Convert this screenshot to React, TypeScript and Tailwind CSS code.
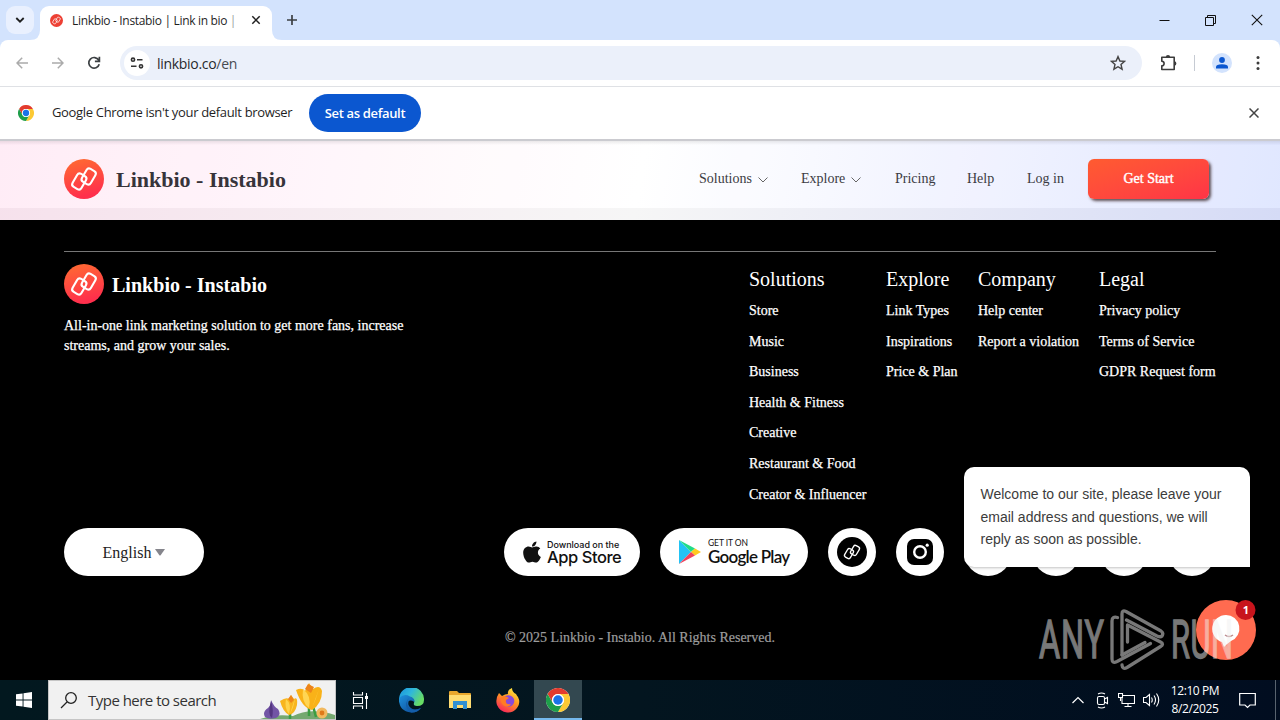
import React from "react";
import { FaApple } from "react-icons/fa";

const UI = "font-['Open_Sans','Noto_Sans',sans-serif]";
const SERIF = "font-['Liberation_Serif',serif]";

function LinkGlyph() {
  return (
    <g fill="none" stroke="#fff" strokeWidth="2.100" strokeLinejoin="round">
      <rect x="10.200" y="15" width="10.200" height="15" rx="3" transform="rotate(30 15.300 22.500)" />
      <rect x="19.600" y="10" width="10.200" height="15" rx="3" transform="rotate(30 24.700 17.500)" />
    </g>
  );
}

function Logo({ id }: { id: string }) {
  return (
    <svg width="40" height="40" viewBox="0 0 40 40" className="shrink-0">
      <defs>
        <linearGradient id={id} x1="0" y1="0" x2="0.25" y2="1">
          <stop offset="0" stopColor="#ff6d31" />
          <stop offset="1" stopColor="#ff2f4c" />
        </linearGradient>
      </defs>
      <circle cx="20" cy="20" r="20" fill={`url(#${id})`} />
      <LinkGlyph />
    </svg>
  );
}

function Chrome({ size }: { size: number }) {
  return (
    <svg width={size} height={size} viewBox="0 0 48 48" className="shrink-0">
      <circle cx="24" cy="24" r="24" fill="#fff" />
      <path d="M3.200 12 A24 24 0 0 1 44.800 12 H24 A12 12 0 0 0 13.600 30 Z" fill="#e33b2e" />
      <path d="M44.800 12 A24 24 0 0 1 24 48 L34.400 30 A12 12 0 0 0 24 12 Z" fill="#fcc934" />
      <path d="M24 48 A24 24 0 0 1 3.200 12 L13.600 30 A12 12 0 0 0 34.400 30 Z" fill="#1e9e4a" />
      <circle cx="24" cy="24" r="12" fill="#fff" />
      <circle cx="24" cy="24" r="9.500" fill="#1a73e8" />
    </svg>
  );
}

function TabStrip() {
  return (
    <div className="flex h-10 shrink-0 bg-[#d3e3fd]">
      <div className="flex w-10 items-center pl-[6px]">
        <div className="flex h-7 w-7 items-center justify-center rounded-[9px] bg-[#e9f0fe]">
          <svg width="10" height="8" viewBox="0 0 10 8" fill="none" stroke="#1f1f1f" strokeWidth="1.800">
            <path d="M1.300 2 L5 5.700 L8.700 2" />
          </svg>
        </div>
      </div>
      <div className="relative mt-[6px] flex w-[232px] items-center rounded-t-[9px] bg-white pb-[6px] pl-[10px]">
        <svg width="10" height="10" viewBox="0 0 10 10" className="absolute bottom-0 -left-[10px]">
          <path d="M10 0 V10 H0 Q10 10 10 0" fill="#fff" />
        </svg>
        <svg width="10" height="10" viewBox="0 0 10 10" className="absolute -right-[10px] bottom-0">
          <path d="M0 0 V10 H10 Q0 10 0 0" fill="#fff" />
        </svg>
        <svg width="13" height="13" viewBox="0 0 40 40" className="shrink-0">
          <circle cx="20" cy="20" r="20" fill="#ed4034" />
          <LinkGlyph />
        </svg>
        <span className={`ml-[9px] w-[170px] pt-[2px] text-[12px] leading-4 tracking-[-0.33px] whitespace-nowrap text-[#1f1f1f] ${UI}`}>
          Linkbio - Instabio | Link in bio <span className="text-[#999]">|</span>
        </span>
        <svg width="10" height="10" viewBox="0 0 10 10" className="absolute top-[9px] right-[11px]" stroke="#1f1f1f" strokeWidth="1.500">
          <path d="M1.300 1.300 L8.700 8.700 M8.700 1.300 L1.300 8.700" />
        </svg>
      </div>
      <div className="flex flex-1 items-center pl-[14px]">
        <svg width="12" height="12" viewBox="0 0 12 12" stroke="#3c4043" strokeWidth="1.700">
          <path d="M6 1 V11 M1 6 H11" />
        </svg>
      </div>
      <div className="flex items-center">
        <svg width="11" height="11" viewBox="0 0 11 11" stroke="#111" className="mr-[35px]">
          <path d="M0.500 5.500 H10.500" />
        </svg>
        <svg width="11" height="11" viewBox="0 0 11 11" stroke="#111" fill="none" className="mr-[35px]">
          <path d="M0.500 2.500 H8.500 V10.500 H0.500 Z M2.500 2.500 V0.500 H10.500 V8.500 H8.500" />
        </svg>
        <svg width="12" height="12" viewBox="0 0 12 12" stroke="#111" strokeWidth="1.100" className="mr-[17px]">
          <path d="M0.800 0.800 L11.200 11.200 M11.200 0.800 L0.800 11.200" />
        </svg>
      </div>
    </div>
  );
}

function Toolbar() {
  return (
    <div className="h-[47px] shrink-0 bg-[#d3e3fd]">
      <div className="flex h-full items-center rounded-t-[8px] border-b border-[#dfe1e5] bg-white pl-4">
        <svg width="12" height="12" viewBox="0 0 12 12" fill="none" stroke="#ababab" strokeWidth="1.500">
          <path d="M12 6 H1.200 M6.200 0.800 L1 6 L6.200 11.200" />
        </svg>
        <svg width="12" height="12" viewBox="0 0 12 12" fill="none" stroke="#ababab" strokeWidth="1.500" className="ml-6">
          <path d="M0 6 H10.800 M5.800 0.800 L11 6 L5.800 11.200" />
        </svg>
        <svg width="14" height="14" viewBox="0 0 14 14" fill="none" stroke="#3c4043" strokeWidth="1.700" className="ml-[23px]">
          <path d="M11.700 4.200 A5.300 5.300 0 1 0 12.200 8.200 M12.400 0.800 V5.300 H7.900" />
        </svg>
        <div className="ml-[19px] flex h-[34px] w-[1022px] items-center rounded-full bg-[#ebf0fa] pl-1">
          <div className="flex h-[26px] w-[26px] items-center justify-center rounded-full bg-white">
            <svg width="14" height="12" viewBox="0 0 14 12" fill="none" stroke="#333" strokeWidth="1.600">
              <circle cx="3" cy="2.700" r="1.600" />
              <path d="M7 2.700 H12.500 M1 9.300 H6.500" />
              <circle cx="11" cy="9.300" r="1.600" />
            </svg>
          </div>
          <span className={`ml-[7px] pt-px text-[14px] leading-5 tracking-[-0.3px] text-[#27292c] ${UI}`}>
            linkbio.co<span className="text-[#474a50]">/en</span>
          </span>
          <svg width="16" height="16" viewBox="0 0 16 16" fill="none" stroke="#444" strokeWidth="1.400" className="mr-4 ml-auto">
            <path d="M8 1.600 L9.900 6 L14.600 6.400 L11 9.500 L12.100 14.200 L8 11.700 L3.900 14.200 L5 9.500 L1.400 6.400 L6.100 6 Z" />
          </svg>
        </div>
        <svg width="18" height="18" viewBox="0 0 18 18" fill="none" className="ml-[18px]">
          <path d="M1.800 3.200 H14.200 V15.500 H1.800 V11.800 A2.200 2.200 0 0 0 1.800 7.200 Z" stroke="#3c3c3c" strokeWidth="1.600" strokeLinejoin="round" />
          <path d="M5.800 3.200 A2.200 2.200 0 0 1 10.200 3.200 Z M14.200 7.200 A2.200 2.200 0 0 1 14.200 11.600 Z" fill="#3c3c3c" />
        </svg>
        <div className="ml-4 h-4 w-px bg-[#c6cbd3]" />
        <svg width="20" height="20" viewBox="0 0 20 20" className="ml-[17px]">
          <circle cx="10" cy="10" r="10" fill="#d3e3fd" />
          <circle cx="10" cy="7" r="2.900" fill="#0b57d0" />
          <path d="M4 15.500 V14 Q4 11.200 10 11.200 Q16 11.200 16 14 V15.500 Z" fill="#0b57d0" />
        </svg>
        <svg width="4" height="16" viewBox="0 0 4 16" fill="#3c3c3c" className="ml-6">
          <circle cx="2" cy="2.500" r="1.500" />
          <circle cx="2" cy="8" r="1.500" />
          <circle cx="2" cy="13.500" r="1.500" />
        </svg>
      </div>
    </div>
  );
}

function InfoBar() {
  return (
    <div className={`flex h-[52px] shrink-0 items-center bg-white pl-[18px] text-[13px] ${UI}`}>
      <Chrome size={16} />
      <span className="ml-[18px] w-[257px] tracking-[-0.33px] whitespace-nowrap text-[#1f1f1f]">Google Chrome isn't your default browser</span>
      <div className="flex h-[38px] w-28 items-center justify-center rounded-full bg-[#0b57d0] pt-px font-semibold tracking-[-0.35px] whitespace-nowrap text-white">
        Set as default
      </div>
      <svg width="10" height="10" viewBox="0 0 10 10" stroke="#444" strokeWidth="1.500" className="mr-[21px] ml-auto">
        <path d="M0.500 0.500 L9.500 9.500 M9.500 0.500 L0.500 9.500" />
      </svg>
    </div>
  );
}

function Caret() {
  return (
    <svg width="10" height="6" viewBox="0 0 10 6" fill="none" stroke="#666" className="mt-[3px] ml-[6px]">
      <path d="M0.500 0.500 L5 5 L9.500 0.500" />
    </svg>
  );
}

function SiteHeader() {
  return (
    <div className="flex h-[81px] shrink-0 flex-col border-t-2 border-[#cbcbd0] bg-[linear-gradient(100deg,#ffeaf5_0%,#fff_50%,#eff1ff_76%,#dde4ff_100%)]">
      <div className="h-1 shrink-0 bg-linear-to-b from-black/8 to-transparent" />
      <div className="flex h-[63px] shrink-0 items-center bg-white/10 px-16 pt-[5px] text-[14px] text-[#3b3b42]">
        <Logo id="logo-top" />
        <span className="ml-3 text-[22px] font-bold text-[#37343a]">Linkbio - Instabio</span>
        <div className="ml-auto flex items-center pb-[2px]">
          <div className="flex w-[102px] items-center">Solutions<Caret /></div>
          <div className="flex w-[94px] items-center">Explore<Caret /></div>
          <div className="w-[72px]">Pricing</div>
          <div className="w-[60px]">Help</div>
          <div className="w-[61px]">Log in</div>
        </div>
        <div className="mr-[7px] flex h-10 w-[121px] items-center justify-center rounded-[6px] bg-linear-to-br from-[#ff5b30] to-[#ff3346] pb-[2px] text-white shadow-[2px_2px_3px_rgba(50,30,30,0.75)]">
          <span className="[-webkit-text-stroke:0.4px_white]">Get Start</span>
        </div>
      </div>
      <div className="h-3 shrink-0 bg-black/[0.035]" />
    </div>
  );
}

const columns = [
  { title: "Solutions", width: "w-[137px]", links: ["Store", "Music", "Business", "Health & Fitness", "Creative", "Restaurant & Food", "Creator & Influencer"] },
  { title: "Explore", width: "w-[92px]", links: ["Link Types", "Inspirations", "Price & Plan"] },
  { title: "Company", width: "w-[121px]", links: ["Help center", "Report a violation"] },
  { title: "Legal", width: "w-[117px]", links: ["Privacy policy", "Terms of Service", "GDPR Request form"] },
];

function SiteFooter() {
  return (
    <div className="flex h-[460px] shrink-0 flex-col bg-black px-16 pt-[31px] text-white">
      <div className="h-px shrink-0 bg-[#777]" />
      <div className="flex h-[276px] shrink-0 justify-between pt-3">
        <div className="w-[360px]">
          <div className="flex items-center">
            <Logo id="logo-bottom" />
            <span className="ml-2 pt-px text-[20px] leading-6 font-bold tracking-[0.03px]">Linkbio - Instabio</span>
          </div>
          <p className="mt-3 text-[14px] leading-5 whitespace-nowrap [-webkit-text-stroke:0.25px_white]">
            All-in-one link marketing solution to get more fans, increase<br />streams, and grow your sales.
          </p>
        </div>
        <div className="flex">
          {columns.map((c) => (
            <div key={c.title} className={c.width}>
              <div className="h-[32px] text-[20px] leading-[30px]">{c.title}</div>
              {c.links.map((l) => (
                <div key={l} className="h-[30.6px] text-[14px] leading-[30.6px] whitespace-nowrap [-webkit-text-stroke:0.25px_white]">{l}</div>
              ))}
            </div>
          ))}
        </div>
      </div>
      <div className="flex h-12 shrink-0 items-center text-black">
        <div className="mr-[300px] flex h-12 w-[140px] items-center justify-center rounded-full bg-white text-[16px] text-[#222]">
          <span className="pt-[2px]">English</span>
          <svg width="10" height="7" viewBox="0 0 10 7" className="ml-1"><path d="M0 0 H10 L5.800 6 Q5 7 4.200 6 Z" fill="#85858c" /></svg>
        </div>
        <div className="mr-5 flex h-12 w-[136px] items-center rounded-full bg-white pl-[18px]">
          <FaApple size={24} className="-ml-[2px]" color="#111" />
          <div className="ml-[3px] pb-px font-['Inter',sans-serif] whitespace-nowrap text-[#111]">
            <div className="text-[9px] leading-[11px] font-medium tracking-[-0.02px]">Download on the</div>
            <div className="text-[16.500px] leading-[15px] font-medium tracking-[-0.45px]">App Store</div>
          </div>
        </div>
        <div className="mr-5 flex h-12 w-[148px] items-center rounded-full bg-white pl-[18px]">
          <svg width="23" height="26" viewBox="0 0 23 26">
            <path d="M1 1 V25 L13 13 Z" fill="#22c3f5" />
            <path d="M1 1 L17 9.500 L13 13 Z" fill="#20dc88" />
            <path d="M17 9.500 L23 13 L17 16.500 L13 13 Z" fill="#ffc91f" />
            <path d="M13 13 L17 16.500 L1 25 Z" fill="#f0415b" />
          </svg>
          <div className="ml-[7px] whitespace-nowrap text-[#111]">
            <div className="font-['Lato',sans-serif] text-[8.500px] leading-[9px] tracking-[-0.1px]">GET IT ON</div>
            <div className="font-['Lato',sans-serif] text-[17px] leading-[17px] font-semibold tracking-[-0.75px]">Google Play</div>
          </div>
        </div>
        <div className="mr-5 flex h-12 w-12 items-center justify-center rounded-full bg-white">
          <svg width="30" height="30" viewBox="0 0 40 40"><circle cx="20" cy="20" r="20" fill="#000" /><g transform="translate(3 3) scale(0.85)"><LinkGlyph /></g></svg>
        </div>
        <div className="mr-5 flex h-12 w-12 items-center justify-center rounded-full bg-white">
          <svg width="26" height="26" viewBox="0 0 26 26"><rect width="26" height="26" rx="7" fill="#000" /><circle cx="13" cy="13" r="5.800" fill="none" stroke="#fff" strokeWidth="2.400" /><circle cx="20.200" cy="6.200" r="1.600" fill="#fff" /></svg>
        </div>
        {[0, 1, 2, 3].map((i) => (
          <div key={i} className="mr-5 h-12 w-12 shrink-0 rounded-full bg-white last:mr-0" />
        ))}
      </div>
      <div className="pt-[51px] text-center text-[14px] leading-[21px] text-[#9d9d9d] [-webkit-text-stroke:0.2px_#9d9d9d]">© 2025 Linkbio - Instabio. All Rights Reserved.</div>
    </div>
  );
}

function ChatWidget() {
  return (
    <>
      <div className="absolute top-[467px] left-[964px] h-[100px] w-[286px] rounded-t-[10px] rounded-bl-[10px] bg-white px-[16.500px] py-4 font-['Liberation_Sans',sans-serif] text-[14px] leading-[22.500px] whitespace-nowrap text-[#3c3c3c] shadow-[0_1px_3px_rgba(0,0,0,0.25)]">
        Welcome to our site, please leave your<br />email address and questions, we will<br />reply as soon as possible.
      </div>
      <svg width="60" height="62" viewBox="0 0 60 62" className="absolute top-[599px] left-[1196px]">
        <circle cx="30" cy="31" r="30" fill="#ff6b50" />
        <path d="M30 16 A13.500 13.500 0 0 1 35 42 Q32 44 28 48 L26 43 A13.800 13.800 0 0 1 30 16" fill="#fff" />
        <path d="M29 36 Q33 39 37 36" fill="none" stroke="#b88" strokeWidth="1.400" />
        <circle cx="49.500" cy="11" r="10" fill="#c8141c" />
      </svg>
      <div className="absolute top-[603px] left-[1236px] w-5 text-center font-['Open_Sans',sans-serif] text-[11px] leading-[14px] font-bold text-white">1</div>
    </>
  );
}

function Watermark() {
  return (
    <div className="absolute top-[608px] left-[1039px] flex h-16 w-[200px] items-center opacity-50">
      <div className="w-[70px] font-['Roboto',sans-serif] text-[53px] leading-[66px] text-[#f0f0f0] [-webkit-text-stroke:1.300px_#f0f0f0]">
        <div className="origin-left scale-x-[0.610] tracking-[1.500px]">ANY</div>
      </div>
      <svg width="56" height="64" viewBox="0 0 56 64" fill="none" stroke="#f0f0f0" strokeWidth="3.300" strokeLinejoin="round" strokeLinecap="round" className="shrink-0">
        <path d="M8.500 9.500 Q3 8 3 13 V51 Q3 56 8 53.500 L41.500 35.500" />
        <path d="M13 47 V6 Q13 1.500 17 3.500 L52 23 Q55 25 53 28 Q51.500 29.500 48 28 L17.500 12" />
        <path d="M13 47 L36 34.500 M18.500 34 V17 L51.500 34 Q55.500 36 51.500 38.500 L18 59.500 Q13.500 62 13 57" />
      </svg>
      <div className="ml-[6px] font-['Roboto',sans-serif] text-[53px] leading-[66px] text-[#f0f0f0] [-webkit-text-stroke:1.300px_#f0f0f0]">
        <div className="w-10 origin-left scale-x-[0.580] tracking-[1px]">RUN</div>
      </div>
    </div>
  );
}

function Crocus() {
  return (
    <svg width="80" height="38" viewBox="0 0 80 38" className="ml-auto">
      <path d="M0 40 Q18 32 38 35 Q55 26 80 34 V40 Z" fill="#75a870" />
      <path d="M35 38 V25 M54 35 V20 M61 36 L58 25" stroke="#3b9d43" strokeWidth="2.500" />
      <path d="M16 19 Q19 26 23 28 Q27 34 21 37 Q14 39 10 36 Q7 31 13 27 Q16 24 16 19" fill="#7254a5" />
      <path d="M16 20 Q19 29 17 37 Q12 34 16 20" fill="#543681" />
      <path d="M25 20 Q31 16 34 18 L36 14 L39 18 Q43 15 42 24 Q40 33 34 34 Q28 31 25 20" fill="#f8b51e" />
      <path d="M31 18 Q37 23 34 33 Q29 27 31 18 M40 17 Q39 26 35 33" fill="#ffd34c" />
      <path d="M41 9 Q47 6 50 10 L54 2 L58 8 Q65 3 67 10 Q67 23 57 29 Q47 27 41 9" fill="#f9b218" />
      <path d="M48 8 Q57 15 54 27 Q46 21 48 8 M64 8 Q61 18 57 27" fill="#ffd553" />
      <path d="M50 8 L53 3 L59 6 L56 12 Z M33 18 L36 14 L39 19 L36 22 Z" fill="#ed841a" />
      <circle cx="67" cy="32" r="5.500" fill="#f2b95f" />
      <circle cx="67" cy="32" r="2.400" fill="#df7919" />
    </svg>
  );
}

function Taskbar() {
  return (
    <div className={`flex h-10 shrink-0 bg-linear-to-r from-[#02181f] via-[#03151f] to-[#010d20] text-white ${UI}`}>
      <div className="flex w-12 items-center justify-center">
        <svg width="16" height="16" viewBox="0 0 16 16" fill="#fff">
          <path d="M0 2.300 L6.600 1.400 V7.500 H0 Z M7.500 1.200 L16 0 V7.500 H7.500 Z M0 8.400 H6.600 V14.600 L0 13.700 Z M7.500 8.400 H16 V16 L7.500 14.800 Z" />
        </svg>
      </div>
      <div className="flex w-72 items-center border border-[#c5c5c5] bg-[#f1f1f1] pl-[11px] text-[#333]">
        <svg width="18" height="18" viewBox="0 0 18 18" fill="none" stroke="#222" strokeWidth="1.300" className="shrink-0">
          <circle cx="11" cy="7" r="5.300" />
          <path d="M7 11 L1 17" />
        </svg>
        <span className="ml-[10px] text-[15px] tracking-[-0.52px] whitespace-nowrap">Type here to search</span>
        <Crocus />
      </div>
      <div className="flex w-[48px] items-center justify-center">
        <svg width="17" height="17" viewBox="0 0 17 17" fill="none" stroke="#fff" strokeWidth="1.100">
          <path d="M1.500 0 V3 H10.500 V0 M1.500 5.500 H10.500 V11.500 H1.500 Z M1.500 17 V14 H10.500 V17 M14.500 1 V17" />
          <path d="M13 4 H16 V7 H13 Z" fill="#fff" stroke="none" />
        </svg>
      </div>
      <div className="flex w-[54px] items-center justify-center">
        <svg width="25" height="25" viewBox="0 0 25 25">
          <defs>
            <linearGradient id="edge-top" x1="0" y1="0" x2="1" y2="0.500"><stop stopColor="#1892dc" /><stop offset="0.500" stopColor="#2fb7dc" /><stop offset="1" stopColor="#67dc65" /></linearGradient>
            <linearGradient id="edge-low" x1="0" y1="0" x2="1" y2="1"><stop stopColor="#1e91dd" /><stop offset="1" stopColor="#0c438f" /></linearGradient>
          </defs>
          <path d="M0 11 A12.500 12.500 0 0 1 25 12 Q25 18 18 18 Q14 18 15 15 Q16 10 10 9 Q3 8 0 15 Z" fill="url(#edge-top)" />
          <path d="M0.300 10 Q5 5 11 8.500 Q16 10 15.500 14 Q8 10 9.500 17 Q13 24 22 20 Q18 25 12 24.500 Q-1 23 0.300 10" fill="url(#edge-low)" />
          <path d="M10 10 Q5 17 12 21 Q17 23 22 20 Q18 25 12 24.500 Q3 18 10 10" fill="#145da8" />
        </svg>
      </div>
      <div className="flex w-11 items-center justify-center">
        <svg width="22" height="20" viewBox="0 0 22 20">
          <path d="M0 2 Q0 1 1 1 H8 L10 3 H21 Q22 3 22 4 V18 H0 Z" fill="#e9a72d" />
          <path d="M0 5 H22 V18 H0 Z" fill="#ffdc72" />
          <path d="M4 11 H18 V19 H14 V15 H8 V19 H4 Z" fill="#318fd1" />
        </svg>
      </div>
      <div className="flex w-[52px] items-center justify-center">
        <svg width="24" height="25" viewBox="0 0 24 25">
          <defs><linearGradient id="fox" x1="0.800" y1="0" x2="0.250" y2="1"><stop stopColor="#ffed42" /><stop offset="0.450" stopColor="#ff9820" /><stop offset="1" stopColor="#f8205d" /></linearGradient></defs>
          <path d="M3 5 L6 8 Q9 6 12 6 Q11 2 16 0 Q16 4 20 6 Q21 8 22 9 Q25 15 21 20 Q17 25 11 24.500 Q4 24 1 17 Q-1 11 3 5" fill="url(#fox)" />
          <circle cx="12.500" cy="13" r="5.800" fill="#8749db" />
          <path d="M5 9 Q9 7 13 10 L10 12 Q9 17 15 16 Q12 21 7 17 Q4 14 5 9" fill="#ff7b24" />
        </svg>
      </div>
      <div className="flex w-12 items-center justify-center border-b-2 border-[#76b9ed] bg-[#334850] pt-[2px]">
        <Chrome size={24} />
      </div>
      <div className="ml-auto flex items-center">
        <svg width="12" height="8" viewBox="0 0 12 8" fill="none" stroke="#fff" strokeWidth="1.200"><path d="M0.500 7 L6 1.500 L11.500 7" /></svg>
        <svg width="13" height="17" viewBox="0 0 13 17" fill="none" stroke="#fff" strokeWidth="1.100" className="ml-3">
          <rect x="1.500" y="4.500" width="7" height="8" rx="1.500" />
          <path d="M8.500 7 L11.500 5.500 V11.500 L8.500 10 M2 2 Q5.500 0 9 2 M2 15 Q5.500 17 9 15" />
        </svg>
        <svg width="17" height="14" viewBox="0 0 17 14" fill="none" stroke="#fff" strokeWidth="1.100" className="ml-[9px]">
          <path d="M5 2.500 H16.500 V10.500 H4 V5 M10 10.500 V13.500 M6.500 13.500 H13.500" />
          <path d="M0.500 0.500 H4.500 V4.500 H0.500 Z M2.500 4.500 V8" />
        </svg>
        <svg width="17" height="14" viewBox="0 0 17 14" fill="none" stroke="#fff" strokeWidth="1.100" className="ml-2">
          <path d="M0.500 4.500 H3 L6.500 1.500 V12.500 L3 9.500 H0.500 Z M8.500 4.500 Q10 7 8.500 9.500 M11 2.500 Q14 7 11 11.500 M13.500 0.500 Q18 7 13.500 13.500" />
        </svg>
        <div className="ml-[7px] w-[56px] text-center text-[12px] leading-[18px] tracking-[-0.4px] whitespace-nowrap">
          12:10 PM<br />8/2/2025
        </div>
        <svg width="17" height="17" viewBox="0 0 17 17" fill="none" stroke="#fff" strokeWidth="1.200" className="ml-4">
          <path d="M0.700 1.500 H16.300 V13 H11 L8.500 15.500 L6 13 H0.700 Z" />
        </svg>
        <div className="mr-1 ml-[19px] h-10 w-px bg-[#58636f]" />
      </div>
    </div>
  );
}

export default function App() {
  return (
    <div className={`relative flex h-[720px] w-[1280px] flex-col overflow-hidden bg-white ${SERIF}`}>
      <TabStrip />
      <Toolbar />
      <InfoBar />
      <SiteHeader />
      <SiteFooter />
      <Taskbar />
      <ChatWidget />
      <Watermark />
    </div>
  );
}
